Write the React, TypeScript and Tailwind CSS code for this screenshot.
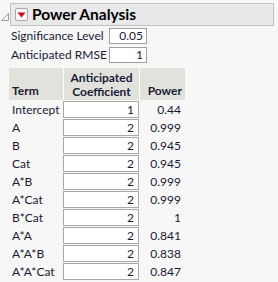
import React from 'react'

const rows: [string, string, string][] = [
  ['Intercept', '1', '0.44'],
  ['A', '2', '0.999'],
  ['B', '2', '0.945'],
  ['Cat', '2', '0.945'],
  ['A*B', '2', '0.999'],
  ['A*Cat', '2', '0.999'],
  ['B*Cat', '2', '1'],
  ['A*A', '2', '0.841'],
  ['A*A*B', '2', '0.838'],
  ['A*A*Cat', '2', '0.847'],
]

const App = () => {
  return (
    <div className="w-[278px] h-[282px] overflow-hidden bg-[#f7f7f7] text-[#1a1a34] text-[12px] leading-none whitespace-nowrap font-['Lato',sans-serif]">
      {/* title bar */}
      <div className="flex items-start pt-[3px]">
        <svg width="10" height="22" viewBox="0 0 10 22" className="shrink-0">
          <path d="M1.5 17.5 L8.5 10.5 L8.5 17.5 Z" fill="#fff" stroke="#9a9a9a" strokeWidth="1" />
        </svg>
        <div className="flex items-center w-[264px] h-[23px] bg-[#e9e9e9] border border-[#c2c2c2]">
          <div className="ml-[4px] w-[13px] h-[13px] rounded-[2px] border border-[#a8a8a8] bg-[#f8f8f8] flex items-center justify-center">
            <svg width="9" height="6" viewBox="0 0 9 6">
              <path d="M0.5 0.5 L8.5 0.5 L4.5 5.5 Z" fill="#d0021b" />
            </svg>
          </div>
          <span className="ml-[4px] text-[15.5px] font-bold text-black">Power Analysis</span>
        </div>
      </div>

      {/* settings */}
      <div className="pl-[11px] pt-[2px] flex flex-col gap-[3px]">
        <div className="flex items-center h-[16px]">
          <span className="w-[98px] shrink-0">Significance Level</span>
          <div className="w-[38px] h-[16px] bg-white border border-[#a0a0a0] flex items-center justify-end pr-[3px]">0.05</div>
        </div>
        <div className="flex items-center h-[16px]">
          <span className="w-[98px] shrink-0">Anticipated RMSE</span>
          <div className="w-[38px] h-[16px] bg-white border border-[#a0a0a0] flex items-center justify-end pr-[3px]">1</div>
        </div>
      </div>

      {/* table */}
      <div className="ml-[9px] mt-[5px] w-[176px]">
        <div className="grid grid-cols-[54px_76px_46px] h-[32px] font-bold">
          <div className="bg-[#e2e2dd] flex items-end pl-[3px] pb-[3px]">Term</div>
          <div className="bg-[#e2e2dd] border-l border-white flex flex-col items-center justify-end pb-[1px]">
            <span className="leading-[14px]">Anticipated</span>
            <span className="leading-[14px]">Coefficient</span>
          </div>
          <div className="bg-[#e2e2dd] border-l border-white flex items-end justify-end pr-[3px] pb-[3px]">Power</div>
        </div>
        <div className="pt-[1px]">
          {rows.map(([term, coef, power]) => (
            <div key={term} className="grid grid-cols-[54px_76px_46px] h-[18px]">
              <div className="flex items-center pl-[3px]">{term}</div>
              <div className="h-[17px] bg-white border border-[#a8a8a8] flex items-center justify-end pr-[4px]">{coef}</div>
              <div className="flex items-center justify-end pr-[4px]">{power}</div>
            </div>
          ))}
        </div>
      </div>
    </div>
  )
}

export default App
